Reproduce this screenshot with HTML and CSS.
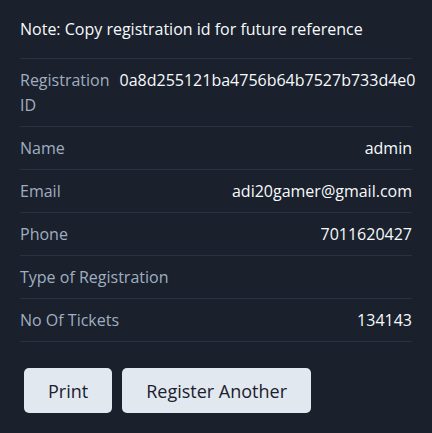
FILE: index.html
```html
<!DOCTYPE html>
<html lang="en">
<head>
<meta charset="utf-8">
<title>Registration</title>
<link rel="stylesheet" href="styles.css">
</head>
<body>
<div class="card">
  <div class="note">Note: Copy registration id for future reference</div>
  <div class="row">
    <div class="label">Registration ID</div>
    <div class="value">0a8d255121ba4756b64b7527b733d4e0</div>
  </div>
  <div class="row">
    <div class="label">Name</div>
    <div class="value">admin</div>
  </div>
  <div class="row">
    <div class="label">Email</div>
    <div class="value">adi20gamer@gmail.com</div>
  </div>
  <div class="row">
    <div class="label">Phone</div>
    <div class="value">7011620427</div>
  </div>
  <div class="row">
    <div class="label">Type of Registration</div>
    <div class="value"></div>
  </div>
  <div class="row">
    <div class="label">No Of Tickets</div>
    <div class="value">134143</div>
  </div>
  <div class="actions">
    <button class="btn">Print</button>
    <button class="btn">Register Another</button>
  </div>
</div>
</body>
</html>
```
FILE: styles.css
```css
html, body {
  margin: 0;
  padding: 0;
  background: #1a202c;
}
body {
  font-family: "Open Sans", "Noto Sans", sans-serif;
  font-size: 16px;
  line-height: 25.6px;
  color: #f7fafc;
}
.card {
  padding: 0 20px;
}
.note {
  padding: 16.5px 0 15.5px;
  border-bottom: 1px solid #2a3140;
  font-weight: 500;
  color: #f7fafc;
}
.row {
  display: flex;
  justify-content: space-between;
  gap: 10px;
  padding: 9px 0 7.4px;
  border-bottom: 1px solid #2a3140;
}
.label {
  color: #a0aec0;
  flex: 0 1 auto;
}
.value {
  white-space: nowrap;
  flex: 0 0 auto;
  color: #f7fafc;
}
.actions {
  display: flex;
  gap: 10px;
  padding: 26px 4px 0;
}
.btn {
  font-family: inherit;
  font-size: 18px;
  line-height: 24px;
  height: 45px;
  padding: 0 24px;
  border: none;
  border-radius: 5px;
  background: #e2e8f0;
  color: #1a202c;
}
```
